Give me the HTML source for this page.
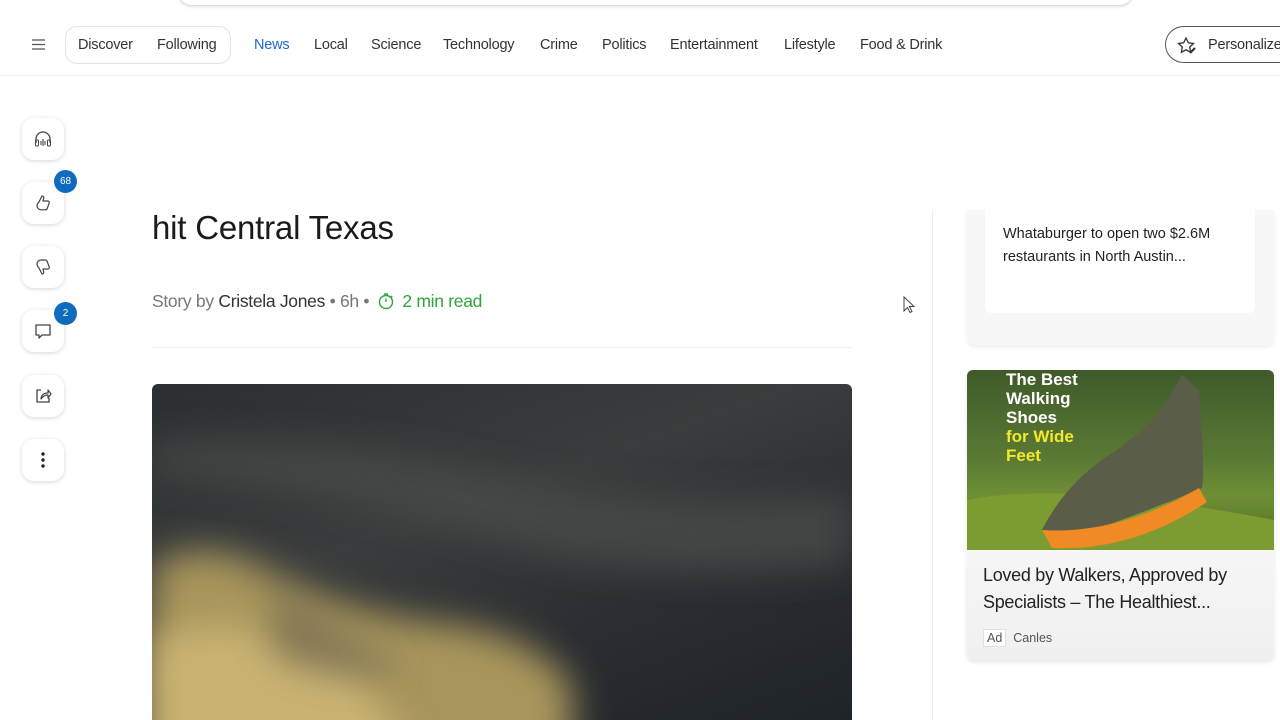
<!DOCTYPE html>
<html><head><meta charset="utf-8"><style>
*{margin:0;padding:0;box-sizing:border-box}
html,body{width:1280px;height:720px;overflow:hidden}
body{background:#fff;font-family:"Liberation Sans",sans-serif;color:#222;position:relative}
.top{position:absolute;left:178px;top:-20px;width:955px;height:26px;border:1px solid #ddd;border-radius:14px;box-shadow:0 1px 3px rgba(0,0,0,.1)}
.nav{position:absolute;left:0;top:16px;width:1280px;height:60px;border-bottom:1px solid #eee}
.nav span{position:absolute;top:21px;font-size:14.5px;color:#333;letter-spacing:-.2px}
.pill{position:absolute;left:65px;top:10px;width:166px;height:38px;border:1px solid #e3e3e3;border-radius:12px}
.pers{position:absolute;left:1165px;top:10px;width:115px;height:37px;border:1px solid #555;border-right:none;border-radius:19px 0 0 19px;overflow:hidden}
.side{position:absolute;left:22px;width:42px;height:42px;border-radius:12px;background:#fff;box-shadow:0 1px 5px rgba(0,0,0,.16);display:flex;align-items:center;justify-content:center}
.badge{position:absolute;width:23px;height:23px;border-radius:50%;background:#0f6cbd;color:#fff;font-size:10px;display:flex;align-items:center;justify-content:center}
h1{position:absolute;left:152px;top:209px;font-size:33px;font-weight:normal;color:#1a1a1a;letter-spacing:-.2px}
.meta{position:absolute;left:152px;top:291px;font-size:17.5px;color:#777;letter-spacing:-.3px}
.img{position:absolute;left:152px;top:384px;width:700px;height:336px;border-radius:6px 6px 0 0;overflow:hidden;background:linear-gradient(160deg,#2c2f31 0%,#3a3d3d 40%,#2a2d31 70%,#1f2428 100%)}
.card1{position:absolute;left:967px;top:210px;width:307px;height:135px;background:#f7f7f7;border-radius:0 0 8px 8px;box-shadow:0 2px 4px rgba(0,0,0,.08)}
.card1 .in{position:absolute;left:18px;top:0;width:270px;height:103px;background:#fff;border-radius:0 0 6px 6px;padding:13px 18px;font-size:14.5px;line-height:23px;color:#222}
.ad{position:absolute;left:967px;top:370px;width:307px;height:290px;border-radius:6px;background:linear-gradient(180deg,#fff,#f0f0f0);box-shadow:0 2px 4px rgba(0,0,0,.1);overflow:hidden}
.adimg{position:absolute;left:0;top:0;width:307px;height:180px;background:linear-gradient(180deg,#3f5a2a 0%,#5b7a34 50%,#6f8f35 70%,#4c6b22 100%)}
.divider{position:absolute;left:932px;top:210px;width:1px;height:510px;background:#eee}
</style></head><body>
<div class="top"></div>
<div class="nav">
<svg style="position:absolute;left:31px;top:22px" width="15" height="13"><path d="M1 2h13M1 6.5h13M1 11h13" stroke="#555" stroke-width="1.3"/></svg>
<div class="pill"></div>
<span style="left:78px">Discover</span><span style="left:157px">Following</span>
<span style="left:254px;color:#1f66d1">News</span><span style="left:314px">Local</span><span style="left:371px">Science</span><span style="left:443px">Technology</span><span style="left:540px">Crime</span><span style="left:602px">Politics</span><span style="left:670px">Entertainment</span><span style="left:784px">Lifestyle</span><span style="left:860px">Food &amp; Drink</span>
<div class="pers"><svg style="position:absolute;left:11px;top:9px" width="20" height="19"><path d="M9 2l2.3 4.8 5.2.7-3.8 3.6.9 5.2L9 13.8l-4.6 2.5.9-5.2L1.5 7.5l5.2-.7z" fill="none" stroke="#333" stroke-width="1.3"/><path d="M13 17l5-5" stroke="#333" stroke-width="2.2"/></svg><span style="left:42px;top:10px;white-space:nowrap">Personalize</span></div>
</div>
<div class="side" style="top:118px"><svg width="20" height="20"><path d="M3 14v-4a7 7 0 0114 0v4" fill="none" stroke="#444" stroke-width="1.3"/><rect x="2.5" y="11" width="3" height="6" rx="1" fill="none" stroke="#444"/><rect x="14.5" y="11" width="3" height="6" rx="1" fill="none" stroke="#444"/><path d="M8 12v4M10 10v7M12 12v4" stroke="#444" stroke-width="1.1"/></svg></div>
<div class="side" style="top:182px"><svg width="20" height="20"><path d="M6 9l3-6c1.5 0 2 1 1.6 2.6L10 8h5c1 0 1.6 1 1.2 2l-2 5.5c-.3.8-1 1.3-1.8 1.3H8c-2 0-4-1.5-4-4 0-1.5 1-3 2-3.8z" fill="none" stroke="#444" stroke-width="1.2"/></svg></div>
<div class="badge" style="left:54px;top:170px">68</div>
<div class="side" style="top:246px"><svg width="20" height="20"><path d="M6 11l3 6c1.5 0 2-1 1.6-2.6L10 12h5c1 0 1.6-1 1.2-2l-2-5.5C13.9 3.7 13.2 3 12.4 3H8C6 3 4 4.5 4 7c0 1.5 1 3 2 4z" fill="none" stroke="#444" stroke-width="1.2"/></svg></div>
<div class="side" style="top:310px"><svg width="20" height="20"><path d="M3 4h14v10H9l-3 3v-3H3z" fill="none" stroke="#444" stroke-width="1.3" stroke-linejoin="round"/></svg></div>
<div class="badge" style="left:54px;top:302px">2</div>
<div class="side" style="top:375px"><svg width="20" height="20"><path d="M8 4H4v12h12v-4" fill="none" stroke="#444" stroke-width="1.3"/><path d="M8 13c0-4 3-6 7-6V4l3 4-3 4V9c-3 0-5 1-7 4z" fill="none" stroke="#444" stroke-width="1.2" stroke-linejoin="round"/></svg></div>
<div class="side" style="top:439px"><svg width="20" height="20"><circle cx="10" cy="4" r="1.7" fill="#222"/><circle cx="10" cy="10" r="1.7" fill="#222"/><circle cx="10" cy="16" r="1.7" fill="#222"/></svg></div>
<h1>hit Central Texas</h1>
<div class="meta">Story by <span style="color:#333">Cristela Jones</span> • 6h • <svg width="18" height="18" style="vertical-align:-3px;margin:0 3px"><circle cx="9" cy="10" r="6.5" fill="none" stroke="#2ea43a" stroke-width="1.4"/><path d="M9 10V6.5M7 2h4M14 4l1.3 1.3" stroke="#2ea43a" stroke-width="1.4"/></svg> <span style="color:#2ea43a">2 min read</span></div>
<div style="position:absolute;left:152px;top:347px;width:700px;height:1px;background:#eee"></div>
<div class="img">
<svg width="700" height="336" style="position:absolute;left:0;top:0">
<defs><filter id="b" x="-50%" y="-50%" width="200%" height="200%"><feGaussianBlur stdDeviation="18"/></filter></defs>
<path d="M0 90 Q200 110 400 170 Q550 200 700 180 L700 110 Q500 130 300 80 Q150 50 0 60z" fill="#4a4c48" filter="url(#b)" opacity=".8"/>
<path d="M0 180 Q60 150 120 190 Q200 230 300 240 Q380 250 420 300 L420 380 L0 380z" fill="#a8955c" filter="url(#b)"/>
<path d="M0 250 Q100 230 200 270 L260 380 L0 380z" fill="#c9b372" filter="url(#b)"/>
<path d="M120 210 Q200 250 250 290 Q180 300 120 270z" fill="#5a5447" filter="url(#b)" opacity=".6"/>
</svg>
</div>
<div class="divider"></div>
<div class="card1"><div class="in">Whataburger to open two $2.6M restaurants in North Austin...</div></div>
<div class="ad">
<div class="adimg">
<svg width="307" height="180" style="position:absolute;left:0;top:0"><path d="M0 130 Q100 110 307 150 L307 180 L0 180z" fill="#7c9b30"/><path d="M75 160 Q100 110 150 80 Q190 50 200 30 L215 5 L232 20 Q238 100 235 118 Q160 150 90 172z" fill="#5a5d48"/><path d="M75 160 Q150 165 232 118 L240 132 Q165 182 85 178z" fill="#f08a24"/></svg>
<div style="position:absolute;left:39px;top:0;font:bold 17px/19px 'Liberation Sans',sans-serif;color:#fff">The Best<br>Walking<br>Shoes<br><span style="color:#f3e92a">for Wide<br>Feet</span></div>
</div>
<div style="position:absolute;left:16px;top:192px;font-size:18px;line-height:27px;color:#222;letter-spacing:-.3px">Loved by Walkers, Approved by Specialists – The Healthiest...</div>
<div style="position:absolute;left:16px;top:261px;font-size:12.5px;color:#555"><span style="border:1px solid #e0e0e0;padding:1px 3px;background:#fff">Ad</span>&nbsp; Canles</div>
</div>
<svg style="position:absolute;left:903px;top:296px" width="12" height="20"><path d="M1 1v14l3.5-3.5 2.5 5 2-1-2.5-5H11z" fill="#fff" stroke="#444"/></svg>
</body></html>
